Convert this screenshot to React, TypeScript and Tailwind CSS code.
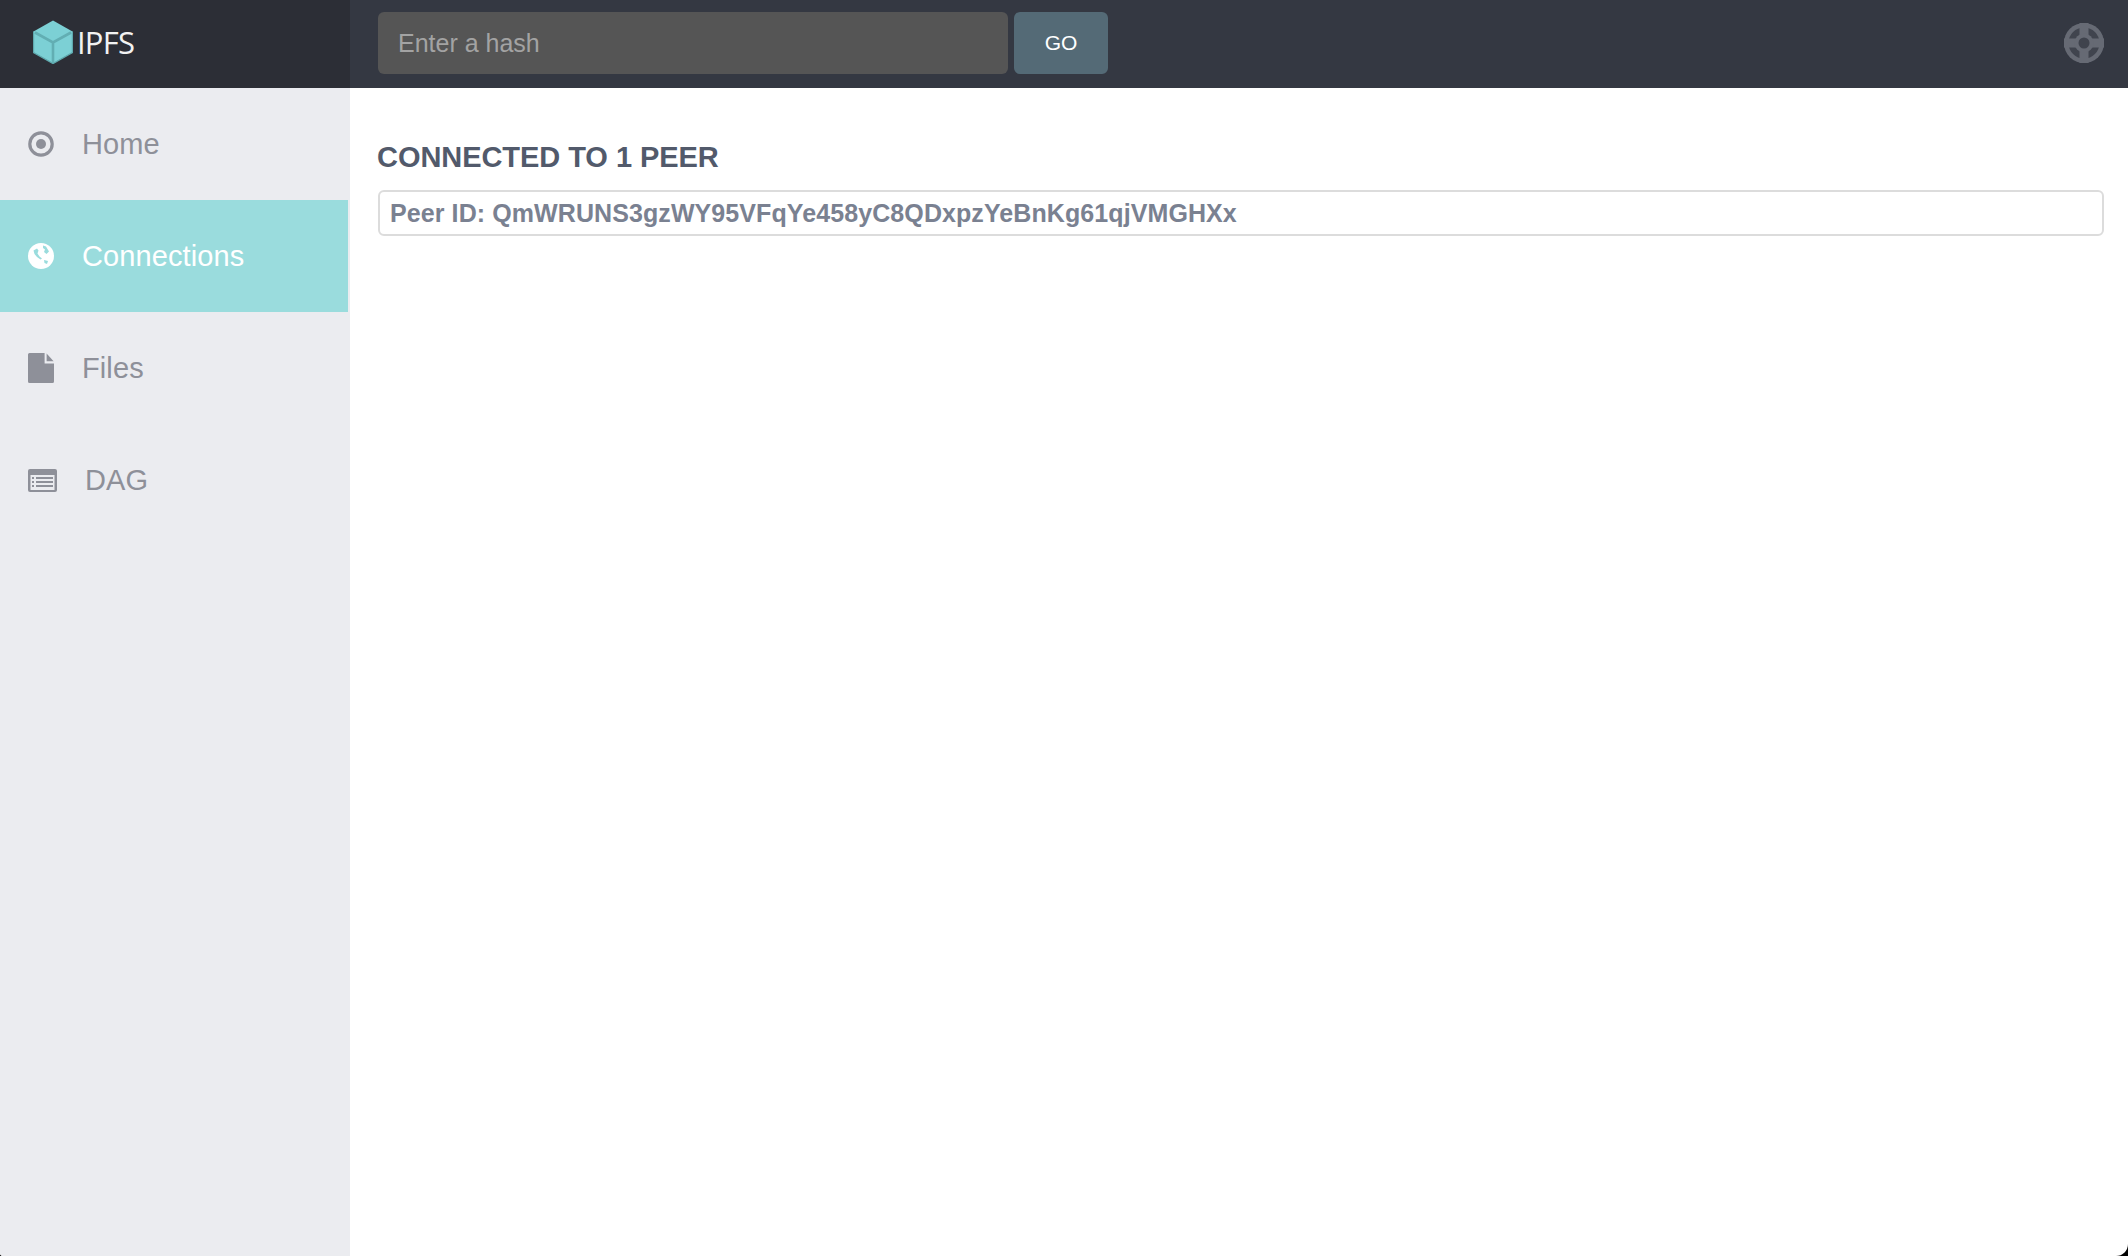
const sans = "font-['Liberation_Sans',Arial,sans-serif]";

function HomeIcon() {
  return (
    <svg width="26" height="26" viewBox="0 0 26 26" className="shrink-0">
      <circle cx="13" cy="13" r="11.2" fill="none" stroke="currentColor" strokeWidth="3.2" />
      <circle cx="13" cy="13" r="5" fill="currentColor" />
    </svg>
  );
}

function GlobeIcon() {
  return (
    <svg width="26" height="26" viewBox="0 0 26 26" className="shrink-0">
      <circle cx="13" cy="13" r="13" fill="#ffffff" />
      <path d="M5.5 7.5 9 5.5 10.5 7.5 9.5 10.5 11.5 13.5 14 15.5 12.5 16.5 9 14 6.5 11Z" fill="#9adcdd" />
      <path d="M15 2.5 18 3.5 21 8.5 18.5 11 16 9 17 6.5 15 5Z" fill="#9adcdd" />
      <path d="M16 17 20 18 19 21 16.5 20Z" fill="#9adcdd" />
    </svg>
  );
}

function FileIcon() {
  return (
    <svg width="26" height="30" viewBox="0 0 26 30" className="shrink-0">
      <path d="M1.5 0H16.6V10.4H26V28.5a1.5 1.5 0 0 1-1.5 1.5H1.5A1.5 1.5 0 0 1 0 28.5V1.5A1.5 1.5 0 0 1 1.5 0Z" fill="currentColor" />
      <path d="M18.6 0.6 25.6 8.2H18.6Z" fill="currentColor" />
    </svg>
  );
}

function DagIcon() {
  return (
    <svg width="30" height="23" viewBox="0 0 30 23" className="shrink-0">
      <rect width="29" height="23" x="0" y="0" rx="2" fill="currentColor" />
      <rect x="2.5" y="6" width="24" height="15" fill="#ebecf0" />
      <rect x="4" y="8" width="2" height="2" fill="currentColor" />
      <rect x="8" y="8" width="17" height="2" fill="currentColor" />
      <rect x="4" y="12" width="2" height="2" fill="currentColor" />
      <rect x="8" y="12" width="17" height="2" fill="currentColor" />
      <rect x="4" y="16" width="2" height="2" fill="currentColor" />
      <rect x="8" y="16" width="17" height="2" fill="currentColor" />
    </svg>
  );
}

function CubeLogo() {
  return (
    <svg width="40" height="44" viewBox="0 0 40 44" className="shrink-0">
      <path d="M20 0.5 39.5 11.5V32.5L20 43.5 0.5 32.5V11.5Z" fill="#7cd0d5" />
      <path d="M0.5 11.5V32.5L20 43.5 39.5 32.5V11.5" fill="none" stroke="#5fa9ae" strokeWidth="1.4" />
      <path d="M2 12.5 20 22.5 38 12.5M20 22.5V43" fill="none" stroke="#62aeb3" strokeWidth="2.6" />
    </svg>
  );
}

function LifeRing() {
  return (
    <svg width="40" height="40" viewBox="0 0 40 40" className="shrink-0">
      <circle cx="20" cy="20" r="20" fill="#666a74" />
      <circle cx="20" cy="20" r="15.5" fill="#40444e" />
      <path d="M15.5 0H24.5V40H15.5ZM0 15.5H40V24.5H0Z" fill="#666a74" />
      <circle cx="20" cy="20" r="9.5" fill="#666a74" />
      <circle cx="20" cy="20" r="5.5" fill="#3f434d" />
    </svg>
  );
}

function NavItem({ icon, label, active, gap }: { icon: React.ReactNode; label: string; active?: boolean; gap: string }) {
  return (
    <div className={`flex h-28 items-center pl-7 text-[29px] ${gap} ${active ? "mr-0.5 bg-[#9adcdd] text-white" : "text-[#8e9099]"}`}>
      <span className="flex items-center">{icon}</span>
      <span className="pt-0.5 tracking-[0.1px]">{label}</span>
    </div>
  );
}

export default function App() {
  return (
    <div className={`h-[1256px] w-[2128px] overflow-hidden bg-black ${sans}`}>
      <div className="flex h-full flex-col overflow-hidden rounded-br-[12px] rounded-bl-[3px] bg-white">
        <header className="flex h-[88px] shrink-0 bg-[#343842]">
          <div className="flex w-[350px] shrink-0 items-center gap-[4px] bg-[#2c2e36] pb-1 pl-[33px]">
            <CubeLogo />
            <span className="font-['Open_Sans',sans-serif] text-[31px] font-normal tracking-[-0.8px] text-[#f2f2f2]">IPFS</span>
          </div>
          <div className="flex flex-1 items-center pr-6 pb-0.5 pl-7">
            <div className="flex h-[62px] w-[630px] items-center rounded-md bg-[#555555] pt-px pl-5 text-[25px] text-[#a3a3a3]">Enter a hash</div>
            <div className="ml-[6px] flex h-[62px] w-[94px] items-center justify-center rounded-md bg-[#546a76] text-[21px] text-white">GO</div>
            <div className="ml-auto"><LifeRing /></div>
          </div>
        </header>
        <div className="flex flex-1">
          <aside className="w-[350px] shrink-0 bg-[#ebecf0]">
            <NavItem icon={<HomeIcon />} label="Home" gap="gap-[28px]" />
            <NavItem icon={<GlobeIcon />} label="Connections" active gap="gap-[28px]" />
            <NavItem icon={<FileIcon />} label="Files" gap="gap-[28px]" />
            <NavItem icon={<DagIcon />} label="DAG" gap="gap-[27px]" />
          </aside>
          <main className="flex-1 pt-[52px] pr-6 pl-[27px]">
            <h1 className="text-[29px] leading-[34px] font-bold tracking-[-0.05px] text-[#525a6b]">CONNECTED TO 1 PEER</h1>
            <div className="mt-[16px] ml-px flex h-[46px] items-center rounded-md border-2 border-[#dcdcdc] pt-px pl-[10px] text-[25px] font-bold tracking-[0.09px] text-[#7a8191]">
              Peer ID: QmWRUNS3gzWY95VFqYe458yC8QDxpzYeBnKg61qjVMGHXx
            </div>
          </main>
        </div>
      </div>
    </div>
  );
}
